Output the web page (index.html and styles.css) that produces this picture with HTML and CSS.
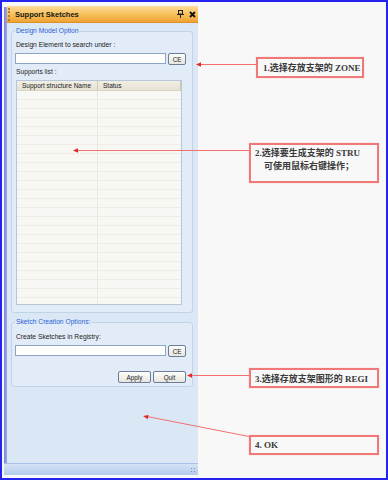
FILE: index.html
```html
<!DOCTYPE html>
<html lang="zh-CN">
<head>
    <meta charset="UTF-8">
    <meta name="viewport" content="width=device-width, initial-scale=1.0">
    <title>Support Sketches</title>
    <link rel="stylesheet" href="styles.css">
</head>
<body>
    <div class="frame">
        <div class="panel">
            <div class="dock">
                <div class="dock-edge"></div>
                <div class="window">
                    <div class="titlebar">
                        <span class="grip"></span>
                        <span class="title">Support Sketches</span>
                        <span class="tools">
                            <svg class="tool-icon" width="7" height="8" viewBox="0 0 7 8">
                                <rect x="1.5" y="0.5" width="4" height="3.5" fill="none" stroke="#222" stroke-width="1"/>
                                <line x1="0" y1="4.5" x2="7" y2="4.5" stroke="#222" stroke-width="1"/>
                                <line x1="3.5" y1="4.5" x2="3.5" y2="8" stroke="#222" stroke-width="1"/>
                            </svg>
                            <svg class="tool-icon" width="7" height="7" viewBox="0 0 7 7">
                                <path d="M1 1 L6 6 M6 1 L1 6" stroke="#111" stroke-width="1.8"/>
                            </svg>
                        </span>
                    </div>
                    <div class="body">
                        <fieldset class="group group-model">
                            <legend>Design Model Option</legend>
                            <div class="label">Design Element to search under :</div>
                            <div class="field-row">
                                <input class="field" type="text">
                                <button class="btn btn-ce">CE</button>
                            </div>
                            <div class="label label-list">Supports list :</div>
                            <div class="grid">
                                <div class="grid-head">
                                    <span class="col col-name">Support structure Name</span>
                                    <span class="col col-status">Status</span>
                                </div>
                                <div class="grid-rows"></div>
                            </div>
                        </fieldset>
                        <fieldset class="group group-sketch">
                            <legend>Sketch Creation Options:</legend>
                            <div class="label">Create Sketches in Registry:</div>
                            <div class="field-row">
                                <input class="field" type="text">
                                <button class="btn btn-ce">CE</button>
                            </div>
                            <div class="actions">
                                <button class="btn btn-action">Apply</button>
                                <button class="btn btn-action">Quit</button>
                            </div>
                        </fieldset>
                    </div>
                </div>
            </div>
            <div class="statusbar"><span class="resize-grip"></span></div>
        </div>

        <div class="notes">
            <div class="note note-1">1.选择存放支架的 ZONE</div>
            <div class="note note-2">
                <span>2.选择要生成支架的 STRU</span>
                <span class="note-indent">可使用鼠标右键操作；</span>
            </div>
            <div class="note note-3">3.选择存放支架图形的 REGI</div>
            <div class="note note-4">4. OK</div>
        </div>
    </div>

    <!-- callout leaders -->
    <svg class="arrows" width="388" height="480" viewBox="0 0 388 480">
        <g stroke="#f27070" stroke-width="1" fill="none">
            <line x1="256" y1="64.5" x2="199" y2="64.5"/>
            <line x1="249" y1="150.5" x2="77" y2="150.5"/>
            <line x1="249" y1="375.5" x2="190" y2="375.5"/>
            <line x1="249" y1="436.5" x2="147" y2="416.5"/>
        </g>
        <g fill="#e42626">
            <polygon points="196,64.5 201,62.3 201,66.7"/>
            <polygon points="73,150.5 78,148.3 78,152.7"/>
            <polygon points="187,375.5 192,373.3 192,377.7"/>
            <polygon points="143,416 148.6,414.9 147.8,419.2"/>
        </g>
    </svg>
</body>
</html>
```

FILE: styles.css
```css
* {
    box-sizing: border-box;
}

html, body {
    margin: 0;
    padding: 0;
    background: #fff;
}

body {
    font-family: 'Liberation Sans', Arial, sans-serif;
    position: relative;
    width: 388px;
    height: 480px;
    overflow: hidden;
}

.frame {
    width: 388px;
    height: 480px;
    border: 2px solid #2424ee;
    background: #f8f8f8;
    display: flex;
    align-items: flex-start;
}

/* docked panel */
.panel {
    width: 194px;
    height: 469px;
    margin: 4px 0 0 2px;
    display: flex;
    flex-direction: column;
}

.dock {
    flex: 1;
    display: flex;
    min-height: 0;
}

.dock-edge {
    width: 3px;
    margin-top: 1px;
    background: linear-gradient(90deg, #7886d6, #9ca8e8);
}

.window {
    flex: 1;
    display: flex;
    flex-direction: column;
    min-width: 0;
}

.titlebar {
    height: 17px;
    display: flex;
    align-items: center;
    padding: 0 2px 0 1px;
    background: linear-gradient(#fddc9c, #f7c25e 50%, #eea234);
    border-bottom: 1px solid #df9228;
}

.grip {
    width: 2px;
    height: 13px;
    border-left: 2px dotted #b5802e;
    margin-right: 5px;
}

.title {
    font-size: 7.5px;
    font-weight: bold;
    color: #151515;
}

.tools {
    margin-left: auto;
    display: flex;
    align-items: center;
    gap: 5px;
}

.tool-icon {
    display: block;
}

.body {
    flex: 1;
    background: #dae7f5;
    padding: 4px 5px 0 4px;
}

.group {
    margin: 0;
    padding: 5px 6px 7px 3px;
    border: 1px solid #c2d3e8;
    border-radius: 3px;
    background: #e2ecf8;
    min-width: 0;
}

.group legend {
    padding: 0 1px;
    font-size: 6.7px;
    line-height: 8px;
    color: #2b63d6;
}

.group-sketch {
    margin-top: 5px;
    padding: 6px 6px 3px 3px;
}

.label {
    font-size: 6.7px;
    line-height: 9px;
    color: #222;
    padding-left: 1px;
    margin-bottom: 4px;
}

.label-list {
    line-height: 8px;
    margin-top: 3px;
}

.field-row {
    display: flex;
    gap: 2px;
    height: 12px;
}

.field {
    flex: 1;
    min-width: 0;
    height: 11px;
    margin: 0;
    padding: 0;
    border: 1px solid #8ea5c3;
    background: #fff;
}

.btn {
    margin: 0;
    padding: 0;
    font-family: 'Liberation Sans', Arial, sans-serif;
    font-size: 6.3px;
    color: #222;
    border: 1px solid #6b7d98;
    border-radius: 2px;
    background: linear-gradient(#fdfdfb, #e6e5de);
}

.btn-ce {
    width: 18px;
    height: 12px;
}

/* supports list */
.grid {
    margin: 0 4px 0 1px;
    height: 225px;
    border: 1px solid #b7c6d9;
    background: #f7f7f4;
    display: flex;
    flex-direction: column;
}

.grid-head {
    height: 10px;
    display: flex;
    background: linear-gradient(#f1efe4, #e6e3d4);
    border-bottom: 1px solid #d7d3c3;
    font-size: 6.5px;
    line-height: 9px;
    color: #222;
}

.col {
    padding-left: 5px;
    border-right: 1px solid #cdc9b9;
    white-space: nowrap;
}

.col-name {
    width: 81px;
}

.col-status {
    width: 83px;
}

.grid-rows {
    flex: 1;
    background:
        linear-gradient(to right, transparent 80px, #e9e7de 80px, #e9e7de 81px, transparent 81px),
        repeating-linear-gradient(to bottom, transparent 0, transparent 8px, #eeece4 8px, #eeece4 9px);
}

.actions {
    display: flex;
    justify-content: flex-end;
    gap: 2px;
    margin-top: 14px;
}

.btn-action {
    width: 33px;
    height: 12px;
}

.statusbar {
    height: 12px;
    position: relative;
    background: linear-gradient(#d6e3f6, #b3caec);
    border-top: 1px solid #a8bfe3;
}

.resize-grip {
    position: absolute;
    right: 1px;
    bottom: 1px;
    width: 7px;
    height: 7px;
    background: radial-gradient(circle, #7a8fb3 0.7px, transparent 1px) 0 0 / 3px 3px;
}

/* annotations */
.notes {
    flex: 1;
    display: flex;
    flex-direction: column;
    align-items: flex-start;
}

.note {
    border: 2px solid #f07878;
    box-shadow: 0 0 1px #f5b0b0;
    font-family: 'Liberation Serif', 'Noto Sans CJK SC', serif;
    font-size: 9px;
    font-weight: bold;
    color: #3a3a3a;
    display: flex;
    align-items: center;
    padding-left: 4px;
    white-space: nowrap;
}

.note-1 {
    margin: 55px 0 0 58px;
    width: 108px;
    height: 21px;
    padding-left: 5px;
}

.note-2 {
    margin: 65px 0 0 51px;
    width: 130px;
    height: 40px;
    flex-direction: column;
    align-items: flex-start;
    justify-content: flex-start;
    padding-top: 2px;
    line-height: 13px;
}

.note-indent {
    padding-left: 9px;
}

.note-3 {
    margin: 185px 0 0 51px;
    width: 130px;
    height: 20px;
}

.note-4 {
    margin: 47px 0 0 51px;
    width: 130px;
    height: 20px;
}

.arrows {
    position: absolute;
    left: 0;
    top: 0;
    pointer-events: none;
}
```
